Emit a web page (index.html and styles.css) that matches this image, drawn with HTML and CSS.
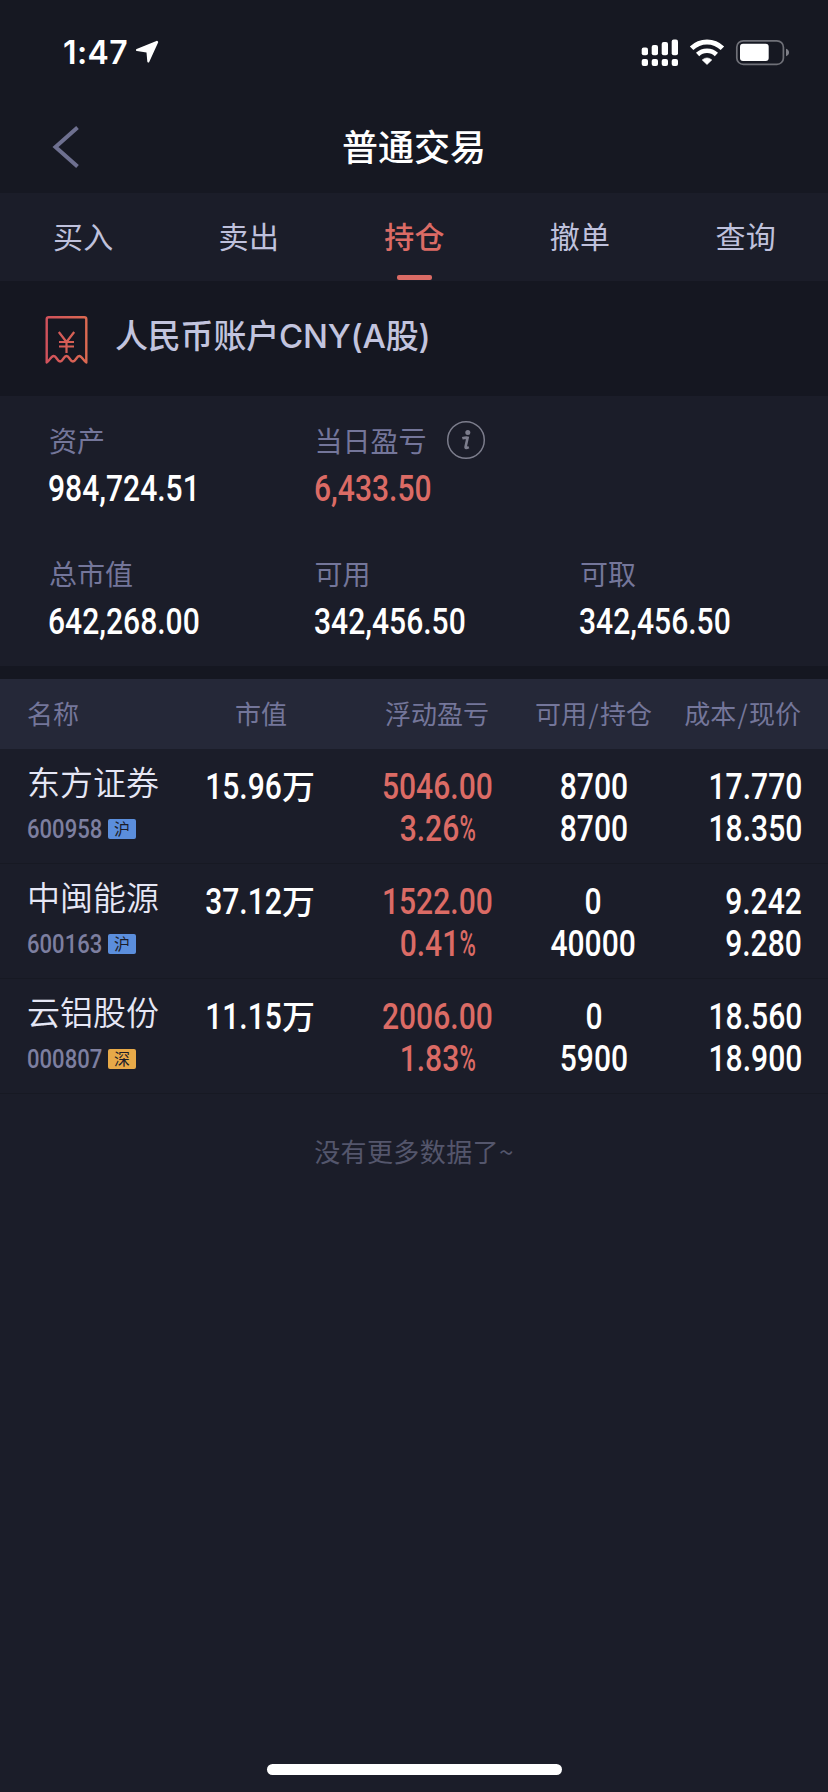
FILE: index.html
```html
<!DOCTYPE html>
<html lang="zh-CN">
<head>
<meta charset="utf-8">
<title>普通交易</title>
<link rel="stylesheet" href="styles.css">
</head>
<body>
<div class="app">
  <header class="top">
    <div class="status">
      <span class="time">1:47</span>
      <svg class="location" width="24" height="24" viewBox="0 0 24 24"><path d="M21.800 1.800 2 10l9.700 1.500q.7.100.8.800l.8 9.200L22.200 2.200z" fill="#fff" stroke="#fff" stroke-width="2" stroke-linejoin="round"/></svg>
      <svg class="signals" width="150" height="30" viewBox="640 37 150 30">
        <g fill="#fff">
          <rect x="641.700" y="47.500" width="6.300" height="7.700" rx="2"/><rect x="651.700" y="45" width="6.300" height="10.200" rx="2"/><rect x="661.700" y="42" width="6.300" height="13.200" rx="2"/><rect x="671.700" y="39.500" width="6.300" height="15.700" rx="2"/>
          <rect x="641.700" y="59" width="6.300" height="7" rx="2"/><rect x="651.700" y="59" width="6.300" height="7" rx="2"/><rect x="661.700" y="59" width="6.300" height="7" rx="2"/><rect x="671.700" y="59" width="6.300" height="7" rx="2"/>
          <path d="M707 64.500l-4.800-4.600q4.800-4 9.600 0z" stroke="#fff" stroke-width=".6" stroke-linejoin="round"/>
          <rect x="740" y="43.700" width="28.700" height="17.300" rx="3"/>
        </g>
        <g fill="none" stroke="#fff" stroke-width="5">
          <path d="M691.600 48.200a22 22 0 0 1 30.800 0"/><path d="M697.600 54.500a13.500 13.500 0 0 1 18.800 0" stroke-width="4.600"/>
        </g>
        <rect x="736.800" y="40.800" width="46.600" height="23.600" rx="6.500" fill="none" stroke="#6f7078" stroke-width="1.700"/>
        <path d="M786 48.800q3 1 3 3.700t-3 3.700z" fill="#7d7e86"/>
      </svg>
    </div>
    <div class="nav">
      <svg class="back" width="30" height="44" viewBox="0 0 30 44"><path d="M25.500 2.500 3.500 22l22 19.500" fill="none" stroke="#6e7090" stroke-width="4"/></svg>
      <h1 class="title">普通交易</h1>
    </div>
  </header>

  <nav class="tabs">
    <a class="tab">买入</a><a class="tab">卖出</a><a class="tab active">持仓</a><a class="tab">撤单</a><a class="tab">查询</a>
  </nav>

  <section class="account">
    <svg class="bill" width="44" height="50" viewBox="0 0 44 50">
      <defs><linearGradient id="billStroke" gradientUnits="userSpaceOnUse" x1="0" y1="0" x2="44" y2="0"><stop offset="0" stop-color="#d0505c"/><stop offset="1" stop-color="#dc6a51"/></linearGradient></defs>
      <g fill="none" stroke="url(#billStroke)" stroke-width="2.400" stroke-linejoin="round">
        <path d="M2.700 47.500V4.200q0-2 2-2h35.600q2 0 2 2v43.300c-2.500-1.200-4.300-6.500-7-6.500s-3.600 5.500-6.400 5.500-3.600-5.500-6.400-5.500-3.600 5.500-6.400 5.500-3.600-5.500-6.400-5.500-4.500 5.300-7 6.500z"/>
        <path d="M14.800 17 22.500 27l7.700-10M22.500 27V38M15 27h15M15 31.500h15" stroke-width="2.200"/>
      </g>
    </svg>
    <h2 class="account-name">人民币账户CNY(A股)</h2>
  </section>

  <section class="summary">
    <div class="stat"><span class="label">资产</span><span class="num">984,724.51</span></div>
    <div class="stat"><span class="label">当日盈亏
      <svg class="info" width="40" height="40" viewBox="0 0 40 40"><circle cx="20" cy="20" r="18.300" fill="none" stroke="#7c7d8c" stroke-width="1.500"/><circle cx="21.800" cy="12.600" r="2.500" fill="#7c7d8c"/><path d="M16.300 18.300q3.500-1 5.300-.6l-2 9q-.4 2.200 3.200.4" fill="none" stroke="#7c7d8c" stroke-width="2.600"/></svg></span><span class="num up">6,433.50</span></div>
    <div class="stat"></div>
    <div class="stat"><span class="label">总市值</span><span class="num">642,268.00</span></div>
    <div class="stat"><span class="label">可用</span><span class="num">342,456.50</span></div>
    <div class="stat"><span class="label">可取</span><span class="num">342,456.50</span></div>
  </section>

  <section class="holdings">
    <div class="grid head"><span>名称</span><span class="mid">市值</span><span class="mid">浮动盈亏</span><span class="mid">可用<i class="slash">/</i>持仓</span><span class="end">成本<i class="slash">/</i>现价</span></div>

    <div class="grid row">
      <div class="stock"><span class="name">东方证券</span><span class="meta"><span class="code">600958</span><span class="badge sh">沪</span></span></div>
      <div class="value"><span class="amount"><span class="num">15.96</span></span><span class="unit">万</span></div>
      <div class="pair mid up"><span class="num">5046.00</span><span class="num">3.26<span class="pct">%</span></span></div>
      <div class="pair mid"><span class="num">8700</span><span class="num">8700</span></div>
      <div class="pair end"><span class="num">17.770</span><span class="num">18.350</span></div>
    </div>
    <div class="grid row">
      <div class="stock"><span class="name">中闽能源</span><span class="meta"><span class="code">600163</span><span class="badge sh">沪</span></span></div>
      <div class="value"><span class="amount"><span class="num">37.12</span></span><span class="unit">万</span></div>
      <div class="pair mid up"><span class="num">1522.00</span><span class="num">0.41<span class="pct">%</span></span></div>
      <div class="pair mid"><span class="num">0</span><span class="num">40000</span></div>
      <div class="pair end"><span class="num">9.242</span><span class="num">9.280</span></div>
    </div>
    <div class="grid row">
      <div class="stock"><span class="name">云铝股份</span><span class="meta"><span class="code">000807</span><span class="badge sz">深</span></span></div>
      <div class="value"><span class="amount"><span class="num">11.15</span></span><span class="unit">万</span></div>
      <div class="pair mid up"><span class="num">2006.00</span><span class="num">1.83<span class="pct">%</span></span></div>
      <div class="pair mid"><span class="num">0</span><span class="num">5900</span></div>
      <div class="pair end"><span class="num">18.560</span><span class="num">18.900</span></div>
    </div>
  </section>

  <p class="nomore">没有更多数据了~</p>
  <div class="home"></div>
</div>
</body>
</html>
```
FILE: styles.css
```css
* { box-sizing: border-box; }
body {
  margin: 0;
  background: #1b1d29;
  color: #fff;
  font-family: "Noto Sans CJK SC", sans-serif;
}
.app {
  display: flex;
  flex-direction: column;
  width: 828px;
  height: 1792px;
  overflow: hidden;
  background: #1b1d29;
}

/* Status bar and title */
.top { height: 193px; background: #161822; }
.status {
  display: flex;
  align-items: center;
  height: 104px;
  padding: 0 38px 0 63px;
}
.time {
  width: 72px;
  font: 600 32px/40px Inter, sans-serif;
  letter-spacing: .4px;
  padding-top: 2px;
}
.signals { margin-left: auto; }
.nav {
  display: grid;
  grid-template-columns: 100px 1fr 100px;
  align-items: center;
  height: 86px;
}
.back { margin-left: 52px; }
.title {
  margin: 0;
  padding-bottom: 5px;
  text-align: center;
  font-size: 36px;
  font-weight: 500;
  line-height: 48px;
}

/* Tabs */
.tabs { display: grid; grid-template-columns: repeat(5, 1fr); height: 88px; background: #1b1d29; }
.tab {
  display: flex;
  flex-direction: column;
  align-items: center;
  justify-content: space-between;
  padding: 20px 0 1px 1px;
  font-size: 30px;
  line-height: 44px;
  letter-spacing: .3px;
  color: #bfc1dc;
}
.tab.active { color: #db6b65; font-weight: 500; }
.tab.active::after { content: ""; width: 35px; height: 5px; border-radius: 2px; background: #db6b65; }

/* Account strip */
.account { display: flex; height: 115px; padding: 34px 0 0 44px; background: #151721; }
.account-name {
  margin: -3px 0 0 27px;
  font: 500 33px/48px Inter, "Noto Sans CJK SC", sans-serif;
  letter-spacing: -.2px;
  color: #c2c4de;
}

/* Condensed figures */
.num {
  display: inline-block;
  font: 500 36px/42px Roboto, sans-serif;
  white-space: nowrap;
  transform: scaleX(.835);
  transform-origin: left;
}
.up { color: #db6b65; }

/* Asset summary */
.summary {
  display: grid;
  grid-template-columns: repeat(3, 265.5px);
  grid-template-rows: 133px 133px;
  height: 270px;
  padding-left: 49px;
}
.stat { display: flex; flex-direction: column; align-items: flex-start; padding-top: 24px; }
.stat .num { margin: 8px 0 0 -1px; }
.label {
  display: flex;
  align-items: center;
  height: 40px;
  font-size: 28px;
  color: #74769a;
}
.info { margin-left: 19px; }

/* Holdings table */
.holdings { border-top: 13px solid #151721; }
.grid { display: grid; grid-template-columns: 146px 176px 176px 137px 1fr; padding: 0 27px; }
.head {
  height: 70px;
  padding-bottom: 3px;
  align-items: center;
  background: #252838;
  color: #74769a;
  font-size: 26px;
  white-space: nowrap;
}
.slash { font-style: normal; margin: 0 1.3px; }
.mid { text-align: center; justify-self: center; }
.end { text-align: right; justify-self: end; }
.row { height: 115px; border-bottom: 1px solid #171923; background: #1b1d29; }
.stock { display: flex; flex-direction: column; }
.name { padding-top: 8px; font-size: 33px; line-height: 48px; font-weight: 350; color: #e6e7f5; white-space: nowrap; }
.meta { display: flex; align-items: center; height: 30px; margin-top: 9px; }
.code {
  width: 81px;
  font: 500 26px/30px Roboto, sans-serif;
  color: #7d7fa0;
  transform: scaleX(.85);
  transform-origin: left;
}
.badge {
  width: 28px;
  height: 20px;
  border-radius: 2px;
  text-align: center;
  font-size: 16px;
  line-height: 19px;
  color: #1b1d29;
}
.sh { background: #5b8edc; }
.sz { background: #e7a948; }
.value { display: flex; justify-content: center; padding-top: 17px; }
.amount { display: flex; justify-content: flex-end; width: 75px; }
.amount .num, .end .num { transform-origin: right; }
.unit { font-size: 33px; line-height: 42px; font-weight: 500; margin-top: -2px; }
.pair { display: flex; flex-direction: column; padding-top: 17px; }
.pair.end { margin-right: -1px; }
.mid .num { transform-origin: center; }
.pct { display: inline-block; width: 19px; transform: scaleX(.74); transform-origin: left; }

.nomore {
  margin: 37px 0 0;
  text-align: center;
  font-size: 26px;
  line-height: 40px;
  letter-spacing: .4px;
  color: #54566c;
}
.home { width: 295px; height: 11px; margin: auto auto 17px; border-radius: 6px; background: #fff; }
```
